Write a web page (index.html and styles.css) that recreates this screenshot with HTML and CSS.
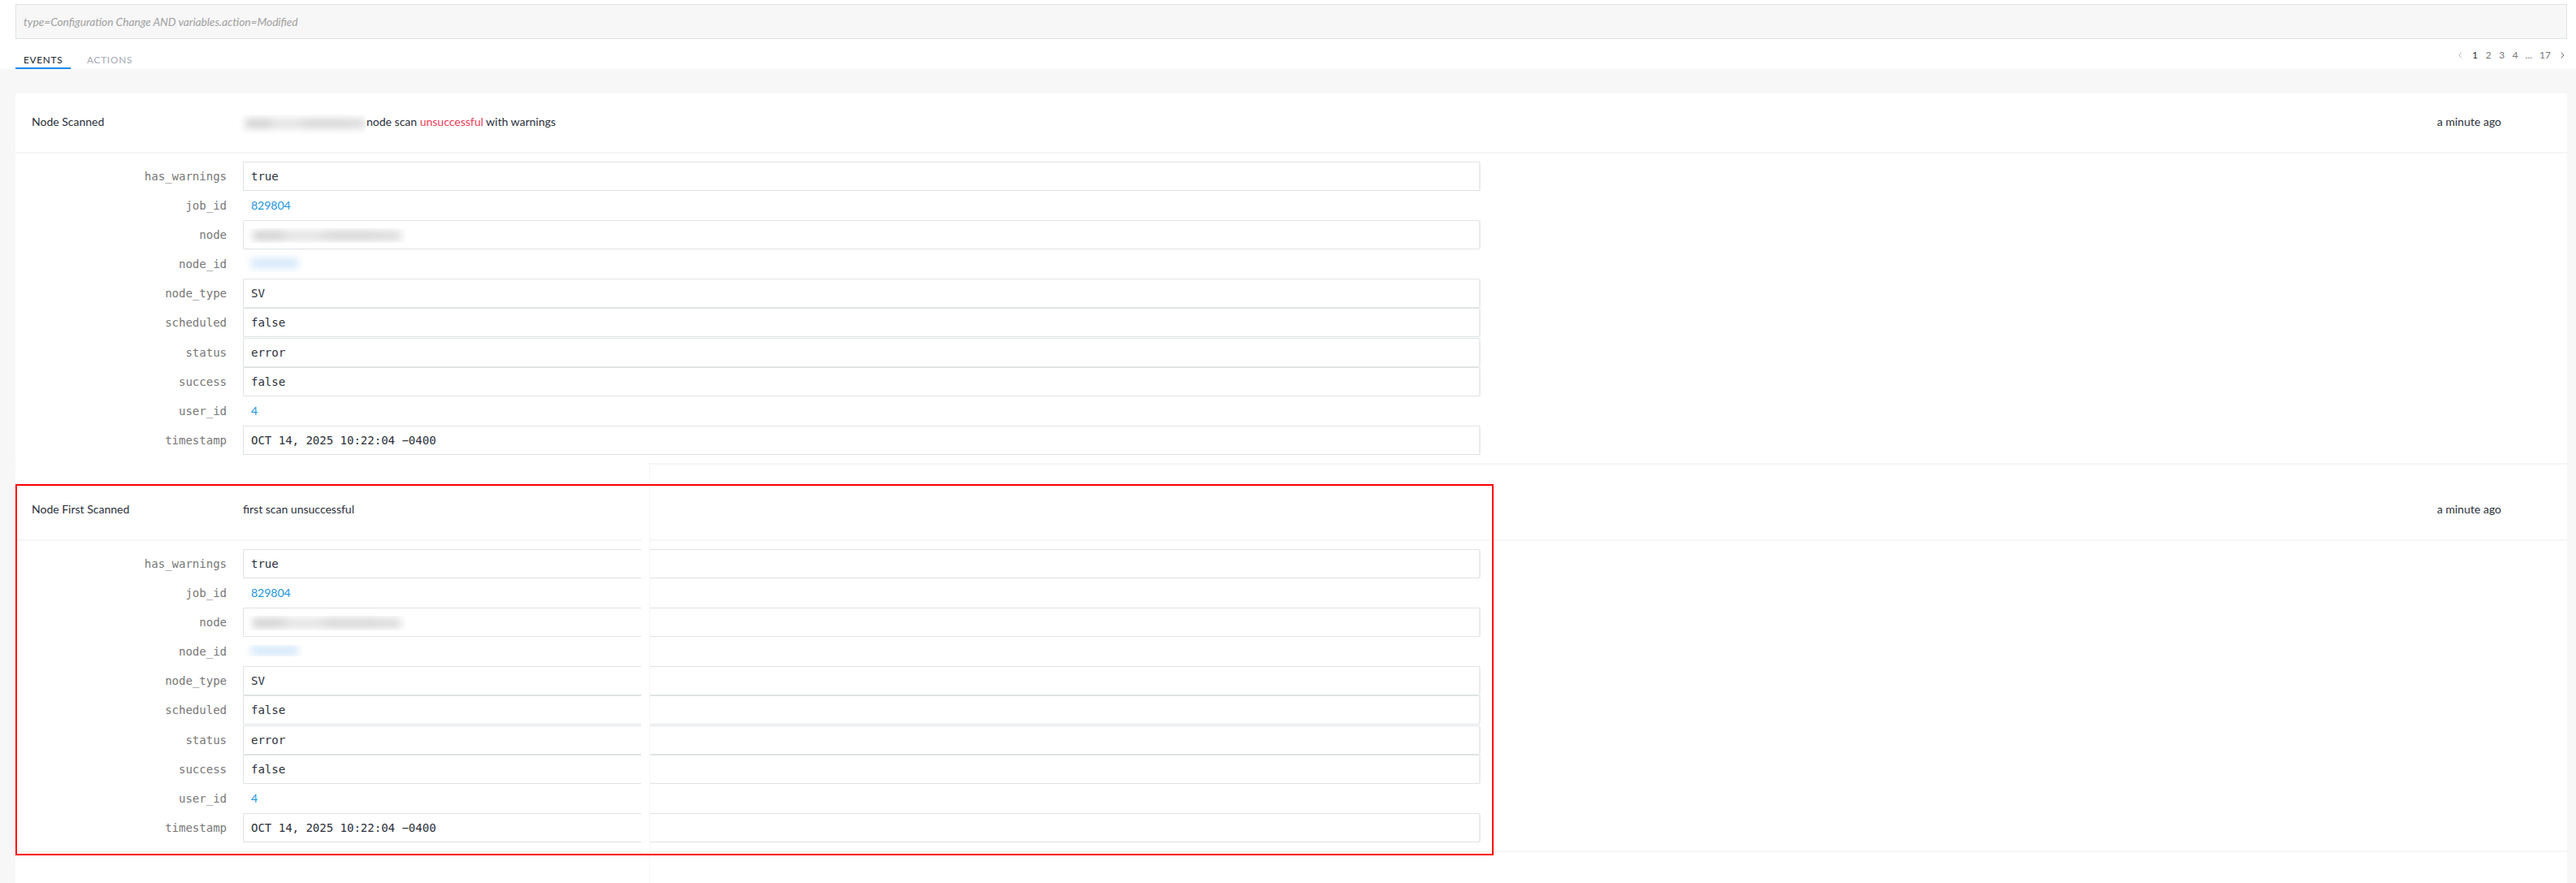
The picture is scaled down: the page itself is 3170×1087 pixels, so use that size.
FILE: index.html
```html
<!DOCTYPE html>
<html lang="en">

<head>
    <meta charset="UTF-8">
    <meta name="viewport" content="width=device-width, initial-scale=1.0">
    <title>Events</title>
    <link rel="stylesheet" href="styles.css">
</head>

<body>
    <header class="top">
        <input class="search" type="text" placeholder="type=Configuration Change AND variables.action=Modified">
        <div class="bar">
            <nav class="tabs">
                <a class="tab active">EVENTS</a>
                <a class="tab">ACTIONS</a>
            </nav>
            <div class="pager">
                <svg class="arrow off" viewBox="0 0 5 8"><path d="M4.3 0.7L1 4L4.3 7.3" /></svg>
                <span class="page current">1</span>
                <span class="page">2</span>
                <span class="page">3</span>
                <span class="page">4</span>
                <span class="page">...</span>
                <span class="page last">17</span>
                <svg class="arrow" viewBox="0 0 5 8"><path d="M0.7 0.7L4 4L0.7 7.3" /></svg>
            </div>
        </div>
    </header>
    <main class="events">
        <section class="event">
            <div class="head">
                <div class="name">Node Scanned</div>
                <div class="desc"><span class="mask mask-head"></span>node scan <span class="bad">unsuccessful</span> with warnings</div>
                <div class="time">a minute ago</div>
            </div>
            <div class="details">
                <div class="row"><label>has_warnings</label><div class="value">true</div></div>
                <div class="row"><label>job_id</label><a class="link">829804</a></div>
                <div class="row"><label>node</label><div class="value"><span class="mask mask-node"></span></div></div>
                <div class="row"><label>node_id</label><a class="link"><span class="mask mask-id"></span></a></div>
                <div class="row"><label>node_type</label><div class="value">SV</div></div>
                <div class="row"><label>scheduled</label><div class="value">false</div></div>
                <div class="row"><label>status</label><div class="value">error</div></div>
                <div class="row"><label>success</label><div class="value">false</div></div>
                <div class="row"><label>user_id</label><a class="link">4</a></div>
                <div class="row"><label>timestamp</label><div class="value">OCT 14, 2025 10:22:04 −0400</div></div>
            </div>
        </section>
        <section class="event second">
            <div class="head">
                <div class="name">Node First Scanned</div>
                <div class="desc">first scan unsuccessful</div>
                <div class="time">a minute ago</div>
            </div>
            <div class="details">
                <div class="row"><label>has_warnings</label><div class="value">true</div></div>
                <div class="row"><label>job_id</label><a class="link">829804</a></div>
                <div class="row"><label>node</label><div class="value"><span class="mask mask-node"></span></div></div>
                <div class="row"><label>node_id</label><a class="link"><span class="mask mask-id short"></span></a></div>
                <div class="row"><label>node_type</label><div class="value">SV</div></div>
                <div class="row"><label>scheduled</label><div class="value">false</div></div>
                <div class="row"><label>status</label><div class="value">error</div></div>
                <div class="row"><label>success</label><div class="value">false</div></div>
                <div class="row"><label>user_id</label><a class="link">4</a></div>
                <div class="row"><label>timestamp</label><div class="value">OCT 14, 2025 10:22:04 −0400</div></div>
            </div>
            <div class="seam"></div>
            <div class="highlight"></div>
        </section>
    </main>
</body>

</html>
```

FILE: styles.css
```css
* {
    box-sizing: border-box;
    margin: 0;
    padding: 0;
}

body {
    height: 1087px;
    overflow: hidden;
    background-color: #f7f7f7;
    color: #2b303b;
    font: 400 14px/20px Lato, sans-serif;
}

.top {
    height: 85px;
    padding: 5px 11px 0 19px;
    background-color: #fff;
}

.search {
    display: block;
    width: 100%;
    height: 43px;
    padding: 0 9px;
    border: 1px solid #dfe3e4;
    background-color: #f7f7f7;
    font: italic 400 13.7px Lato, sans-serif;
}

.search::placeholder {
    color: #a0a0a0;
}

.bar {
    display: flex;
    justify-content: space-between;
    height: 37px;
}

.tabs {
    display: flex;
    gap: 10px;
}

.tab {
    height: 37px;
    padding: 15px 10px 0;
    color: #a9aeb7;
    font-size: 11.7px;
    font-weight: 500;
    letter-spacing: 0.8px;
}

.tab.active {
    width: 68px;
    color: #2b303b;
    border-bottom: 2px solid #1a8cf0;
}

.pager {
    display: flex;
    align-items: center;
    height: 20px;
    margin-top: 10px;
    padding-right: 3px;
    color: #777;
    font-size: 12px;
}

.page {
    width: 16.5px;
    text-align: center;
}

.page.current {
    margin-left: 8px;
    color: #2b303b;
}

.page.last {
    width: 24px;
    margin-right: 7px;
}

.arrow {
    width: 5px;
    height: 8px;
    fill: none;
    stroke: #666;
}

.arrow.off {
    stroke: #bbb;
}

.events {
    margin: 30px 11px 0 19px;
    height: 972px;
    background-color: #fff;
}

.event {
    position: relative;
    height: 457px;
    border-bottom: 2px solid #f6f6f6;
}

.event.second {
    height: 477px;
    padding-top: 20px;
}

.head {
    display: flex;
    height: 74px;
    padding: 25px 81px 0 20px;
    border-bottom: 2px solid #f6f6f6;
}

.name {
    width: 260px;
}

.desc {
    flex: 1;
}

.bad {
    color: #ed3b56;
}

.details {
    width: 1803px;
    padding-top: 10px;
}

.row {
    display: flex;
    height: 36.1px;
}

.row label {
    width: 260px;
    padding-top: 8px;
    color: #777;
    font: 14px/20px "DejaVu Sans Mono", monospace;
    text-align: right;
}

.value {
    flex: 1;
    height: 36px;
    margin-left: 20px;
    padding: 7px 9px;
    border: 1px solid #dfe3e4;
    border-right: 2px solid #eaebec;
    border-radius: 2px;
    font: 14px/20px "DejaVu Sans Mono", monospace;
}

.link {
    margin-left: 20px;
    padding: 8px 10px;
    color: #1b95e0;
}

/* blurred-out names and ids */
.mask {
    display: inline-block;
    overflow: hidden;
    vertical-align: top;
}

.mask::before {
    content: '';
    display: block;
    height: 12px;
    background: linear-gradient(to right, #d2d2d2 0 18%, #e2e2e2 24% 44%, #d6d6d6 52% 78%, #dedede);
    filter: blur(5px);
}

.mask-head {
    width: 156px;
    height: 24px;
    margin: 1px 1px 0 -5px;
    padding: 5px 0 0 8px;
}

.mask-node {
    width: 198px;
    height: 18px;
    margin: 2px 0 0 -8px;
    padding: 3px 5px 0 10px;
}

.mask-id {
    width: 72px;
    height: 22px;
    margin: -2px 0 0 -8px;
    padding: 5px 6px 0 8px;
}

.mask-id::before {
    height: 12px;
    background: #d5e8fa;
}

.mask-id.short {
    height: 14px;
    margin-top: 2px;
    padding-top: 1px;
}

/* strip left where the two halves of the list meet */
.seam {
    position: absolute;
    top: -2px;
    left: 770px;
    width: 11px;
    height: 517px;
    background-color: #fff;
    border-right: 1px solid #f6f6f6;
}

.seam::before {
    content: '';
    position: absolute;
    top: 0;
    right: 9px;
    width: 770px;
    height: 2px;
    background-color: #fff;
}

.highlight {
    position: absolute;
    top: 24px;
    left: 0;
    width: 1819px;
    height: 457px;
    border: 2px solid #f00;
}
```
